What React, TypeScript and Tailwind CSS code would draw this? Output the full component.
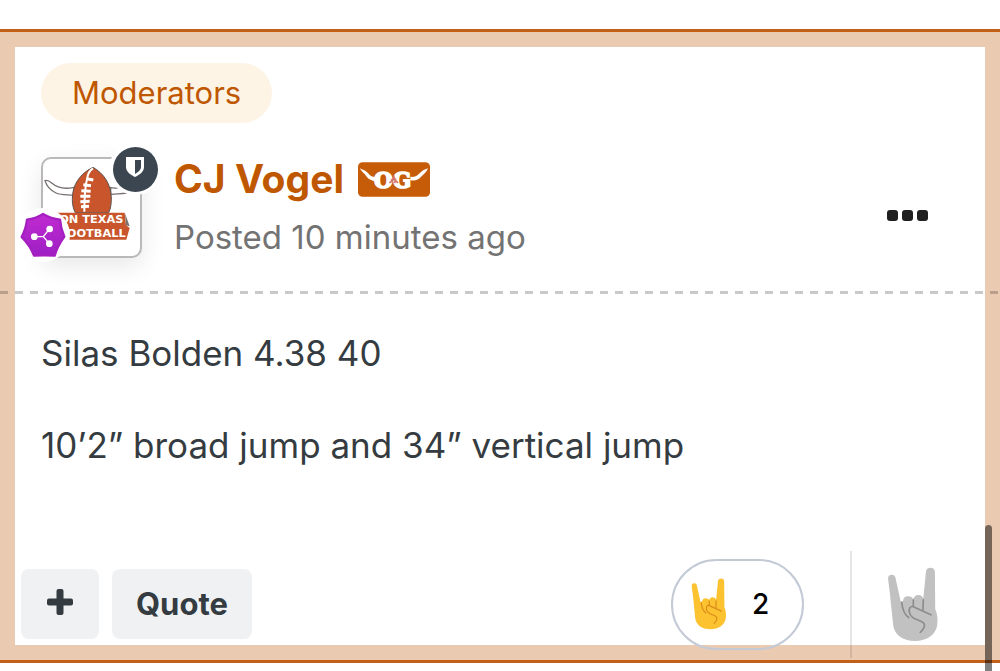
type HornsProps = { className: string; fill: string; line: string };

function Horns({ className, fill, line }: HornsProps) {
  return (
    <svg viewBox="52 48 154 226" className={className} aria-hidden="true">
      <path
        fill={fill}
        d="M54 84C53 75 58 71 65 71C71 71 75 75 76 80L92 152C94 150 97 150 99 151C99 142 105 136 114 136C122 136 128 140 130 145C131 137 137 132 145 132C153 132 158 137 160 143L168 62C169 54 174 50 182 50C190 50 195 55 195 63L196 175C203 190 204 207 202 222C199 251 171 271 135 271C98 271 72 251 69 222C67 192 62 162 60 132Z"
      />
      <path
        fill="none"
        stroke={line}
        strokeWidth="5"
        strokeLinecap="round"
        strokeLinejoin="round"
        d="M95 155C97 173 102 191 116 200M130 148V167M160 147L159 180M183 192L130 168C121 164 116 174 118 184C122 205 144 205 158 214C169 222 162 236 151 245"
      />
    </svg>
  );
}

function TeamLogo() {
  return (
    <svg viewBox="129 87 291 291" className="size-full" role="img" aria-label="On Texas Football">
      <path
        d="M222 172C196 178 171 173 155 159C148 153 140 150 135 152C139 166 151 181 168 189C186 197 204 193 222 196ZM332 173C350 177 370 171 386 158C397 148 407 147 414 153C408 170 394 184 378 189C362 193 347 190 332 194Z"
        fill="#fff"
        stroke="#77716f"
        strokeWidth="4"
      />
      <path
        d="M279 112C239 131 216 166 217 209C217 224 220 237 226 248H326C333 235 334 217 334 204C333 162 312 131 279 112Z"
        fill="#c8552b"
        stroke="#5d5552"
        strokeWidth="3"
      />
      <path d="M279 115C269 121 264 130 262 143C256 165 253 187 253 245" fill="none" stroke="#fff" strokeWidth="6" />
      <path
        d="M259 146L280 150M250 164L273 167M244 182L272 184M241 199L271 199M241 215L269 214M243 230L267 229"
        stroke="#fff"
        strokeWidth="9"
      />
      <path d="M140 248H374L378 285L389 294L379 329H140Z" fill="#c8552b" />
      <path d="M375 250L389 289L378 286Z" fill="#77716f" />
      <text x="370" y="280" textAnchor="end" fontSize="34" fontWeight="700" fill="#fff" fontFamily="'DejaVu Sans', sans-serif">
        ON TEXAS
      </text>
      <text x="377" y="322" textAnchor="end" fontSize="34" fontWeight="700" fill="#fff" fontFamily="'DejaVu Sans', sans-serif">
        FOOTBALL
      </text>
    </svg>
  );
}

function RankBadge() {
  return (
    <svg viewBox="58 244 144 144" className="size-12" role="img" aria-label="Collaborator">
      <defs>
        <linearGradient id="rank" x1="0" y1="0" x2="0" y2="1">
          <stop offset="0" stopColor="#c02bd0" />
          <stop offset="1" stopColor="#9d1fc4" />
        </linearGradient>
      </defs>
      <path
        d="M130 253Q154 267 181 270Q183 297 194 321Q173 350 165 378Q134 376 103 378Q93 350 66 322Q79 298 82 270Q108 267 130 253Z"
        fill="url(#rank)"
        stroke="#a51fc0"
        strokeWidth="7"
        strokeLinejoin="round"
      />
      <path d="M104 321H131L149 298M131 321L149 342" fill="none" stroke="#fff" strokeWidth="4" />
      <circle cx="104" cy="321" r="10" fill="#fff" />
      <circle cx="150" cy="298" r="10" fill="#fff" />
      <circle cx="149" cy="342" r="10" fill="#fff" />
    </svg>
  );
}

function OgBadge() {
  return (
    <svg viewBox="55 68 216 104" className="h-[35px] w-[72px]" role="img" aria-label="OG member">
      <rect x="55" y="68" width="216" height="104" rx="14" fill="#c65b08" />
      <path
        d="M60 86C72 91 80 94 87 103C93 111 101 113 111 112V124C99 125 88 121 80 110C74 100 66 97 60 86ZM265 86C254 89 244 96 238 103C231 111 222 113 212 112V122C224 125 237 122 245 111C252 103 260 99 265 86Z"
        fill="#fff"
      />
      <g fontFamily="'DejaVu Serif', serif" fontWeight="700" fontSize="64" fill="#fff" stroke="#fff" strokeWidth="5">
        <text x="103" y="146">O</text>
        <text x="160" y="146">G</text>
      </g>
      <path d="M162 108L165 120L175 130M162 108L160 122L149 130M155 118L160 131M168 117L165 131" fill="none" stroke="#d5776c" strokeWidth="5" />
    </svg>
  );
}

export default function App() {
  return (
    <main className="min-h-screen overflow-hidden bg-white pt-[29px] font-[Inter,sans-serif] text-[#353c41]">
      <article className="border-y-3 border-[#c2601a] bg-[#ebcab2] p-[15px]">
        <div className="bg-white pt-4 pb-1.5">
          <a href="#moderators" className="ml-[26px] inline-flex h-[60px] items-center rounded-full bg-[#fdf4e6] px-[31px] align-top text-[31px] text-[#bf5700]">
            Moderators
          </a>

          <header className="-mx-[15px] mt-[34px] flex items-start bg-[repeating-linear-gradient(90deg,#00000036_0px,#00000036_8px,transparent_8px,transparent_15px)] bg-[length:100%_3px] bg-bottom bg-no-repeat pr-[72px] pb-9 pl-[41px]">
            <div className="relative size-[101px] shrink-0 rounded-[10px] border-2 border-[#b9b9b9] bg-white shadow-[0_8px_24px_#00000018]">
              <TeamLogo />
              <span className="absolute -top-4 -right-[21px] flex size-[52px] items-center justify-center rounded-full bg-white">
                <span className="flex size-[45px] items-center justify-center rounded-full bg-[#3b4650]">
                  <svg viewBox="0 0 18 20" className="mb-1 h-5 w-[18px]" aria-label="Moderator" role="img">
                    <path d="M0 0H18V10C18 15 13 18 9 20C5 18 0 15 0 10Z" fill="#fff" />
                    <path d="M9 3H15V10C15 13 12 15 9 17Z" fill="#3b4650" />
                  </svg>
                </span>
              </span>
              <span className="absolute -bottom-[6px] -left-[27px] flex size-[54px] items-center justify-center rounded-full bg-white">
                <RankBadge />
              </span>
            </div>

            <div className="ml-8 flex-1">
              <div className="flex h-11 items-center gap-3.5">
                <h1 className="text-[39px] font-bold text-[#bf5700]">
                  <a href="#profile">CJ Vogel</a>
                </h1>
                <OgBadge />
              </div>
              <a href="#post" className="mt-4 block text-[33px] leading-10 text-[#737373]">
                Posted 10 minutes ago
              </a>
            </div>

            <button type="button" aria-label="More options" className="mt-[53px] flex gap-1 text-[#1f1f1f]">
              <span className="size-[11px] rounded-[3px] bg-current" />
              <span className="size-[11px] rounded-[3px] bg-current" />
              <span className="size-[11px] rounded-[3px] bg-current" />
            </button>
          </header>

          <div className="flex flex-col gap-[46px] px-[26px] pt-9 text-[35px] leading-[46px]">
            <p>Silas Bolden 4.38 40</p>
            <p>10’2” broad jump and 34” vertical jump</p>
          </div>

          <footer className="mt-[101px] flex h-[70px] items-center pr-[46px] pl-1.5">
            <button type="button" aria-label="Multiquote" className="flex h-[70px] w-[78px] items-center justify-center rounded-lg bg-[#f0f1f3]">
              <svg viewBox="0 0 26 26" className="mb-1 size-[26px]" aria-hidden="true">
                <rect x="0" y="9.5" width="26" height="7" rx="2" fill="#353c41" />
                <rect x="9.5" y="0" width="7" height="26" rx="2" fill="#353c41" />
              </svg>
            </button>
            <button type="button" className="ml-[13px] h-[70px] rounded-lg bg-[#f0f1f3] px-6 text-[31px] font-bold">
              Quote
            </button>
            <button type="button" aria-label="2 reactions" className="ml-auto flex h-[91px] w-[133px] shrink-0 items-center rounded-full border-2 border-[#c3cad6] pl-[18px] text-[28px] font-medium text-black">
              <Horns className="h-[52px] w-9" fill="#fcc22f" line="#d98c1c" />
              <span className="ml-[25px]">2</span>
            </button>
            <span className="ml-[46px] h-[107px] w-0.5 shrink-0 bg-black/10" />
            <button type="button" aria-label="React" className="ml-[35px]">
              <Horns className="h-[75px] w-[52px]" fill="#c1c1c1" line="#8c8c8c" />
            </button>
          </footer>
        </div>
      </article>
      <div className="fixed right-2 bottom-0 h-[146px] w-[7px] rounded-t-full bg-black/50" />
    </main>
  );
}
